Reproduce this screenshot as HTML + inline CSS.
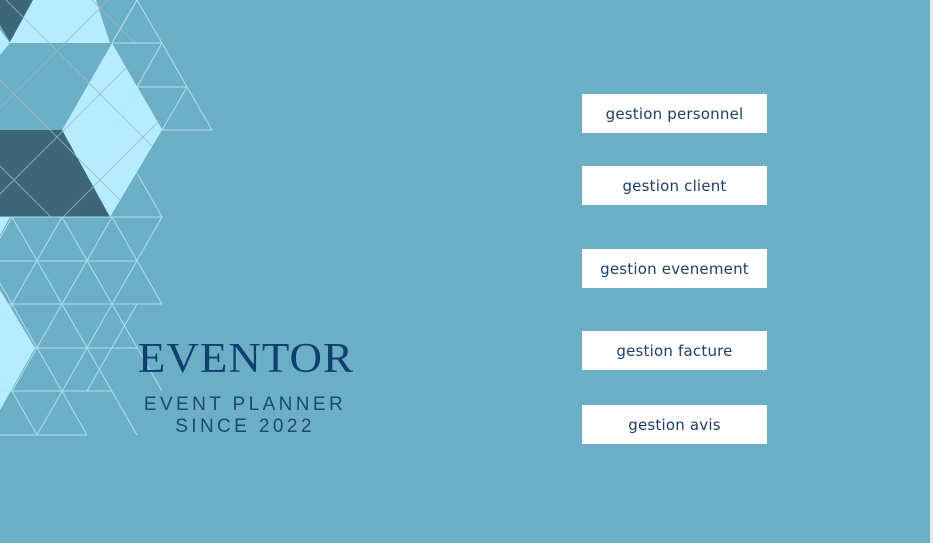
<!DOCTYPE html>
<html><head><meta charset="utf-8"><style>
html,body{margin:0;padding:0}
body{width:933px;height:543px;background:#6daec7;position:relative;overflow:hidden;font-family:"DejaVu Sans","Liberation Sans",sans-serif}
.strip{position:absolute;right:0;top:0;width:3px;height:543px;background:#e8e8e8}
.btn{position:absolute;left:582px;width:185px;height:39px;background:#fff;color:#1e3f66;font-size:15px;text-align:center;line-height:40px;letter-spacing:0.2px}
.t1{position:absolute;left:130px;top:332px;width:232px;text-align:center;font-family:"Liberation Serif",serif;font-size:45px;color:#0f4170;letter-spacing:1px;transform:scaleY(0.95)}
.t2{position:absolute;left:120px;top:394px;width:250px;text-align:center;font-family:"Liberation Sans",sans-serif;font-size:19px;color:#1a4a74;letter-spacing:3.4px;line-height:22px}
</style></head><body>
<svg width="933" height="543" style="position:absolute;left:0;top:0">
<defs><clipPath id="c"><polygon points="0,0 112,0 137,43 112,43 162,130 110,217 0,217"/></clipPath></defs>
<polygon points="0,0 112,0 112,43 62,130 110,217 162,130 112,43 60,43 10,43" fill="#b5ecff"/>
<polygon points="96,0 112,0 137,43 110,43" fill="#6daec7"/>
<polygon points="0,0 33,0 10,42 0,25" fill="#3d6779"/>
<polygon points="0,43 60,43 10,130 0,120" fill="#6daec7"/>
<polygon points="60,43 112,43 62,130 10,130" fill="#6daec7"/>
<polygon points="0,130 62,130 110,217 0,217" fill="#3d6779"/>
<polygon points="0,217 10,217 0,235" fill="#b5ecff"/>
<polygon points="0,290 35,348 0,410" fill="#b5ecff"/>
<polygon points="0,55 10,43 0,30" fill="#b5ecff"/>
<g clip-path="url(#c)" stroke="#9bb7c2" stroke-width="1" opacity="0.8">
<line x1="-100" y1="-192" x2="300" y2="208"/>
<line x1="-100" y1="-106" x2="300" y2="294"/>
<line x1="-100" y1="-20" x2="300" y2="380"/>
<line x1="-100" y1="66" x2="300" y2="466"/>
<line x1="-100" y1="208" x2="300" y2="-192"/>
<line x1="-100" y1="294" x2="300" y2="-106"/>
<line x1="-100" y1="380" x2="300" y2="-20"/>
</g>
<g stroke="#b8e6f2" stroke-width="1" fill="none" opacity="0.85">
<polyline points="112,43 137,0 162,43 187,87 212,130 162,130 137,87 112,130"/>
<line x1="112" y1="43" x2="162" y2="43"/>
<line x1="137" y1="87" x2="187" y2="87"/>
<line x1="137" y1="0" x2="112" y2="43"/>
<line x1="162" y1="43" x2="137" y2="87"/>
<line x1="187" y1="87" x2="162" y2="130"/>
<polyline points="137,173 162,217 112,217"/>
<line x1="0" y1="261" x2="137" y2="261"/>
<line x1="0" y1="304" x2="162" y2="304"/>
<line x1="0" y1="348" x2="137" y2="348"/>
<line x1="0" y1="391" x2="112" y2="391"/>
<line x1="0" y1="435" x2="87" y2="435"/>
<line x1="0" y1="217" x2="162" y2="217"/>
<line x1="62" y1="217" x2="0" y2="325"/>
<line x1="112" y1="217" x2="12" y2="391"/>
<line x1="162" y1="217" x2="37" y2="435"/>
<line x1="137" y1="304" x2="87" y2="391"/>
<line x1="12" y1="217" x2="0" y2="238"/>
<line x1="12" y1="217" x2="137" y2="435"/>
<line x1="62" y1="217" x2="162" y2="391"/>
<line x1="112" y1="217" x2="162" y2="304"/>
<line x1="0" y1="283" x2="87" y2="435"/>
<line x1="0" y1="370" x2="37" y2="435"/>
</g>
</svg>
<div class="t1">EVENTOR</div>
<div class="t2">EVENT PLANNER<br>SINCE 2022</div>
<div class="btn" style="top:94px">gestion personnel</div>
<div class="btn" style="top:166px">gestion client</div>
<div class="btn" style="top:249px">gestion evenement</div>
<div class="btn" style="top:331px">gestion facture</div>
<div class="btn" style="top:405px">gestion avis</div>
<div class="strip"></div>
</body></html>
